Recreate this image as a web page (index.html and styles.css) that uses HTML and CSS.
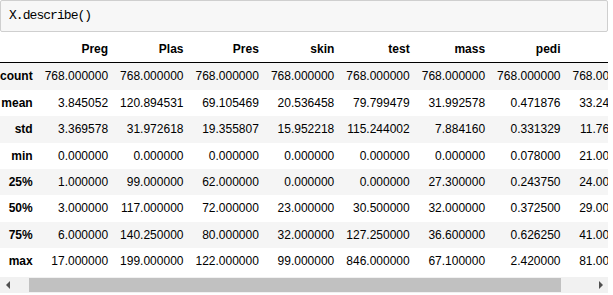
FILE: index.html
```html
<!DOCTYPE html>
<html lang="en">
<head>
  <meta charset="UTF-8" />
  <title>X.describe()</title>
  <link rel="stylesheet" href="styles.css">
</head>
<body>
  <div class="cell">
    <div class="input">
      <pre class="code">X.describe()</pre>
    </div>

    <div class="output">
      <div class="frame">
        <table class="dataframe">
          <thead>
            <tr>
              <th></th>
              <th>Preg</th>
              <th>Plas</th>
              <th>Pres</th>
              <th>skin</th>
              <th>test</th>
              <th>mass</th>
              <th>pedi</th>
              <th>age</th>
              <th>class</th>
            </tr>
          </thead>
          <tbody>
            <tr>
              <th>count</th>
              <td>768.000000</td><td>768.000000</td><td>768.000000</td><td>768.000000</td>
              <td>768.000000</td><td>768.000000</td><td>768.000000</td><td>768.000000</td><td>768.000000</td>
            </tr>
            <tr>
              <th>mean</th>
              <td>3.845052</td><td>120.894531</td><td>69.105469</td><td>20.536458</td>
              <td>79.799479</td><td>31.992578</td><td>0.471876</td><td>33.240885</td><td>0.348958</td>
            </tr>
            <tr>
              <th>std</th>
              <td>3.369578</td><td>31.972618</td><td>19.355807</td><td>15.952218</td>
              <td>115.244002</td><td>7.884160</td><td>0.331329</td><td>11.760232</td><td>0.476951</td>
            </tr>
            <tr>
              <th>min</th>
              <td>0.000000</td><td>0.000000</td><td>0.000000</td><td>0.000000</td>
              <td>0.000000</td><td>0.000000</td><td>0.078000</td><td>21.000000</td><td>0.000000</td>
            </tr>
            <tr>
              <th>25%</th>
              <td>1.000000</td><td>99.000000</td><td>62.000000</td><td>0.000000</td>
              <td>0.000000</td><td>27.300000</td><td>0.243750</td><td>24.000000</td><td>0.000000</td>
            </tr>
            <tr>
              <th>50%</th>
              <td>3.000000</td><td>117.000000</td><td>72.000000</td><td>23.000000</td>
              <td>30.500000</td><td>32.000000</td><td>0.372500</td><td>29.000000</td><td>0.000000</td>
            </tr>
            <tr>
              <th>75%</th>
              <td>6.000000</td><td>140.250000</td><td>80.000000</td><td>32.000000</td>
              <td>127.250000</td><td>36.600000</td><td>0.626250</td><td>41.000000</td><td>1.000000</td>
            </tr>
            <tr>
              <th>max</th>
              <td>17.000000</td><td>199.000000</td><td>122.000000</td><td>99.000000</td>
              <td>846.000000</td><td>67.100000</td><td>2.420000</td><td>81.000000</td><td>1.000000</td>
            </tr>
          </tbody>
        </table>
      </div>

      <div class="hscroll">
        <span class="scroll-btn"><span class="arrow-left"></span></span>
        <div class="track"><div class="thumb"></div></div>
        <span class="scroll-btn"><span class="arrow-right"></span></span>
      </div>
    </div>
  </div>
</body>
</html>
```

FILE: styles.css
```css
body {
  margin: 0;
  background: #fff;
  font-family: "Liberation Sans", Arial, sans-serif;
  color: #000;
}

.cell {
  width: 608px;
}

.input {
  background: #f7f7f7;
  border: 1px solid #cfcfcf;
  border-radius: 2px;
  height: 30px;
}

.code {
  margin: 0;
  padding: 0 8px;
  line-height: 30px;
  font-family: "Liberation Mono", "DejaVu Sans Mono", monospace;
  font-size: 13px;
  letter-spacing: -0.95px;
  color: #000;
}

.output {
  margin-top: 4px;
}

.frame {
  overflow: hidden;
}

.dataframe {
  border-collapse: collapse;
  border-spacing: 0;
  margin-left: -6px;
  font-size: 12px;
  white-space: nowrap;
}

.dataframe th,
.dataframe td {
  text-align: right;
  vertical-align: middle;
  padding: 6px;
  line-height: 14.4px;
  border: none;
}

.dataframe th {
  font-weight: bold;
}

.dataframe thead th {
  border-bottom: 1px solid #000;
}

.dataframe tbody tr:nth-child(odd) {
  background: #f5f5f5;
}

.hscroll {
  display: flex;
  height: 16px;
  margin-top: 2px;
  background: #f1f1f1;
}

.scroll-btn {
  width: 15px;
  display: flex;
  align-items: center;
  justify-content: center;
}

.arrow-left {
  width: 0;
  height: 0;
  border-top: 4px solid transparent;
  border-bottom: 4px solid transparent;
  border-right: 4px solid #505050;
}

.arrow-right {
  width: 0;
  height: 0;
  border-top: 4px solid transparent;
  border-bottom: 4px solid transparent;
  border-left: 4px solid #505050;
}

.track {
  flex: 1;
  display: flex;
  align-items: center;
}

.thumb {
  margin-left: 14px;
  width: 532px;
  height: 14px;
  background: #c1c1c1;
}
```
